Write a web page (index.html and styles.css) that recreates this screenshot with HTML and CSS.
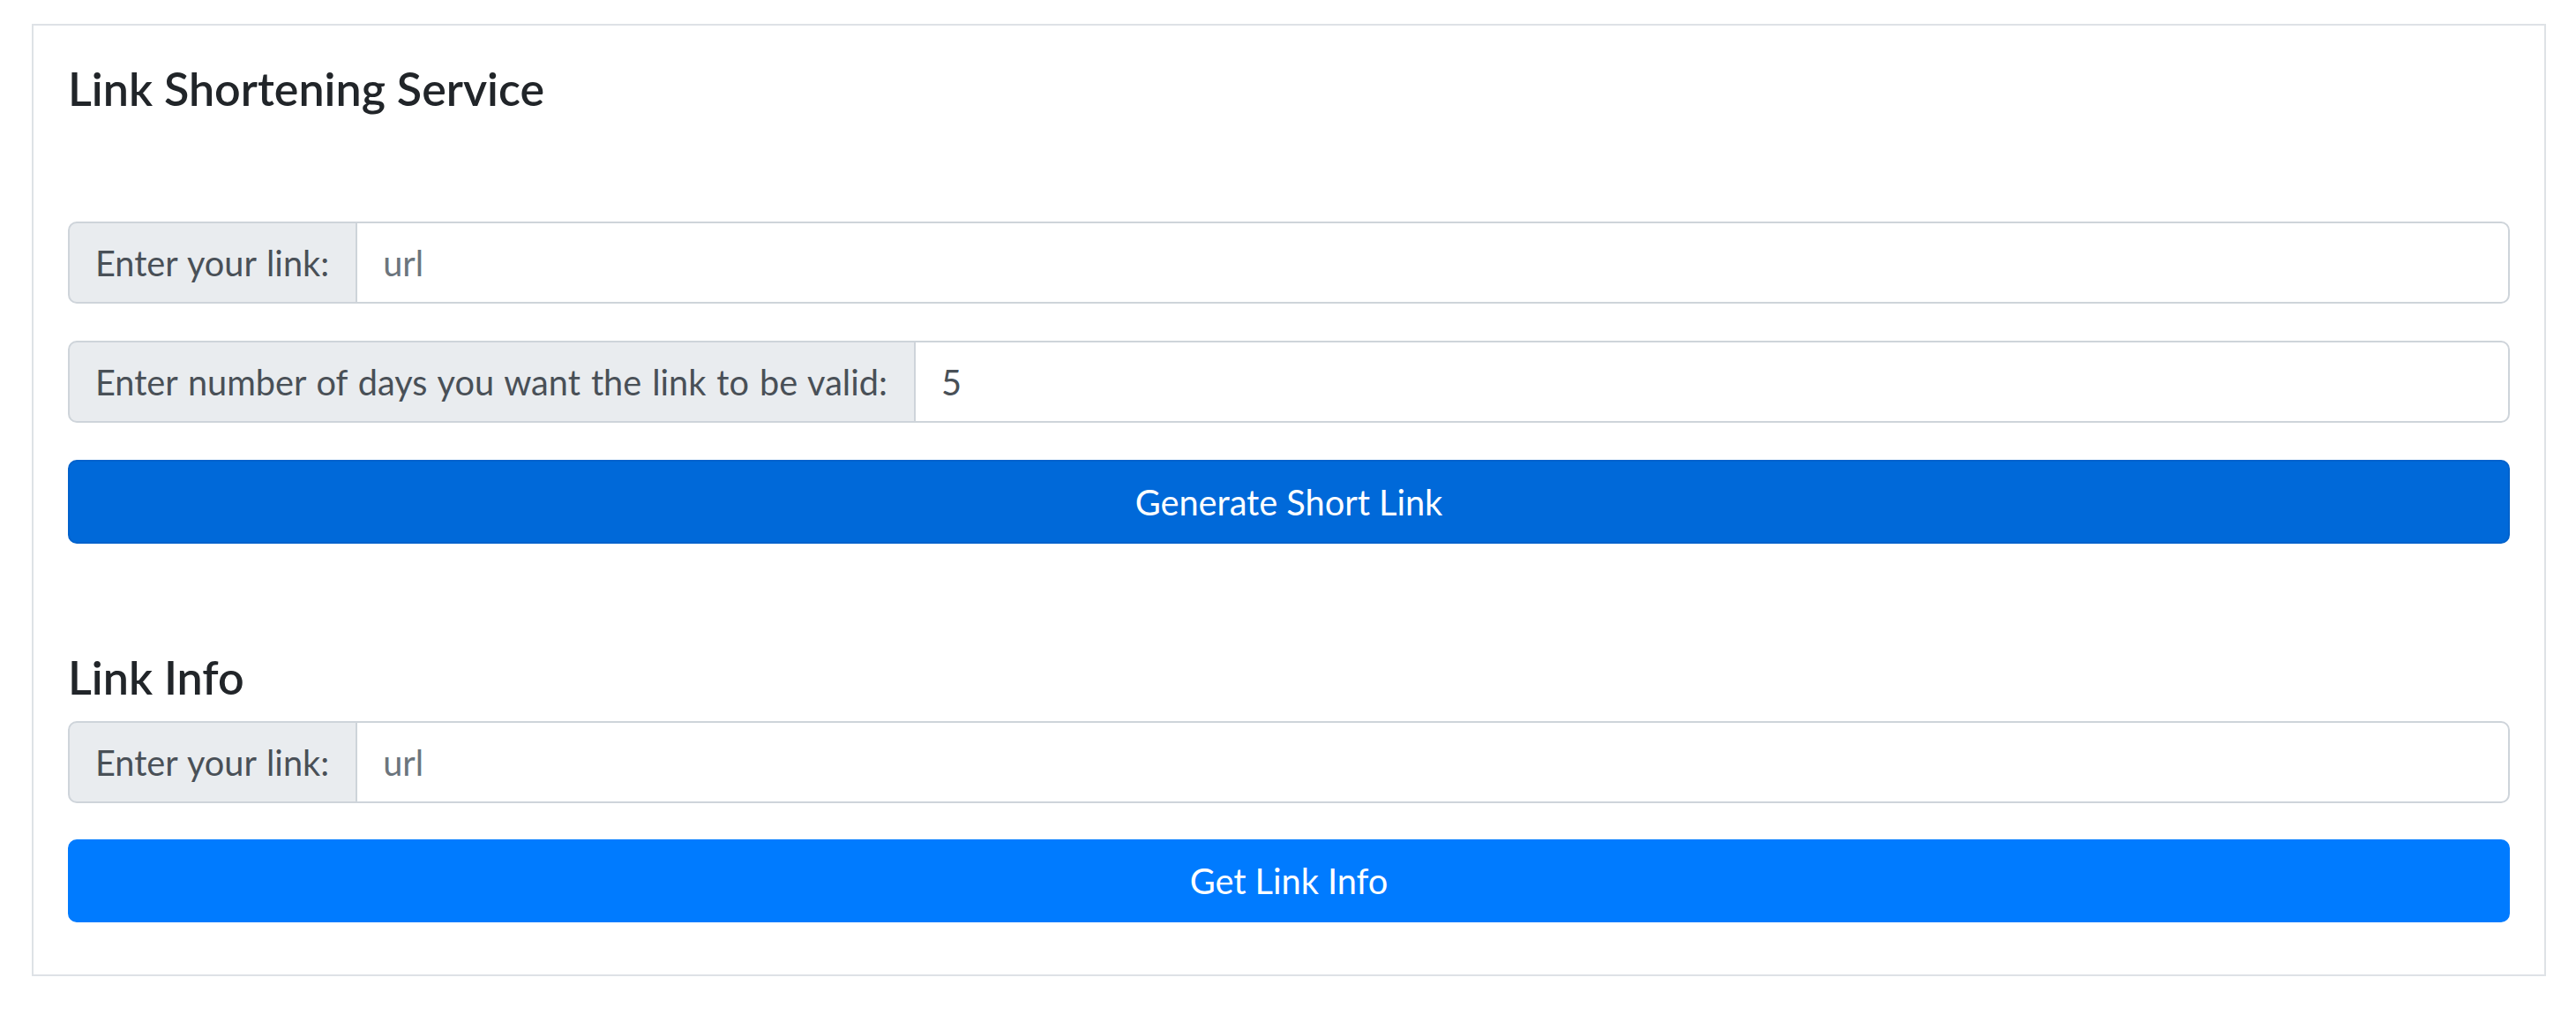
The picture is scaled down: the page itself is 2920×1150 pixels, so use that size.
FILE: index.html
```html
<!DOCTYPE html>
<html lang="en">
<head>
<meta charset="utf-8">
<title>Link Shortening Service</title>
<link rel="stylesheet" href="styles.css">
</head>
<body>
<div class="page">
  <div class="panel">
    <h4 class="title">Link Shortening Service</h4>
    <form class="form-shorten">
      <div class="input-group">
        <span class="addon">Enter your link:</span>
        <input class="field" type="text" placeholder="url">
      </div>
      <div class="input-group">
        <span class="addon">Enter number of days you want the link to be valid:</span>
        <input class="field" type="text" value="5">
      </div>
      <button class="btn btn-active" type="button">Generate Short Link</button>
    </form>
    <h4 class="title title-info">Link Info</h4>
    <form class="form-info">
      <div class="input-group">
        <span class="addon">Enter your link:</span>
        <input class="field" type="text" placeholder="url">
      </div>
      <button class="btn btn-primary" type="button">Get Link Info</button>
    </form>
  </div>
</div>
</body>
</html>
```
FILE: styles.css
```css
* { box-sizing: border-box; }
html, body { margin: 0; padding: 0; background: #fff; }
body {
  font-family: Lato, "Segoe UI", "Noto Sans", sans-serif;
  color: #212529;
  font-size: 39.7px;
  line-height: 1.5;
}
.page {
  padding: 27px 34px 0 36px;
}
.panel {
  border: 2px solid #dee2e6;
  padding: 39px 39px 59px 39px;
}
.title {
  margin: 0;
  font-size: 52px;
  font-weight: 600;
  line-height: 65px;
  color: #212529;
}
.form-shorten {
  margin: 118px 0 0 0;
  display: flex;
  flex-direction: column;
  gap: 42px;
}
.title-info {
  margin-top: 119px;
}
.form-info {
  margin-top: 17px;
  display: flex;
  flex-direction: column;
  gap: 41px;
}
.input-group {
  display: flex;
  align-items: stretch;
  height: 93px;
}
.addon {
  display: flex;
  align-items: center;
  padding: 0 30px 0 29px;
  background: #e9ecef;
  color: #495057;
  border: 2px solid #ced4da;
  border-radius: 10px 0 0 10px;
  white-space: nowrap;
  word-spacing: 1.8px;
}
.field {
  flex: 1;
  min-width: 0;
  margin-left: -2px;
  padding: 0 29px;
  font: inherit;
  color: #495057;
  background: #fff;
  border: 2px solid #ced4da;
  border-radius: 0 10px 10px 0;
  outline: none;
}
.field::placeholder { color: #6c757d; opacity: 1; }
.btn {
  display: block;
  width: 100%;
  height: 95px;
  font: inherit;
  color: #fff;
  border-radius: 10px;
  cursor: pointer;
}
.btn-active {
  background: #0069d9;
  border: 2px solid #0062cc;
}
.btn-primary {
  background: #007bff;
  border: 2px solid #007bff;
}
.form-info .btn { height: 94px; }
```
